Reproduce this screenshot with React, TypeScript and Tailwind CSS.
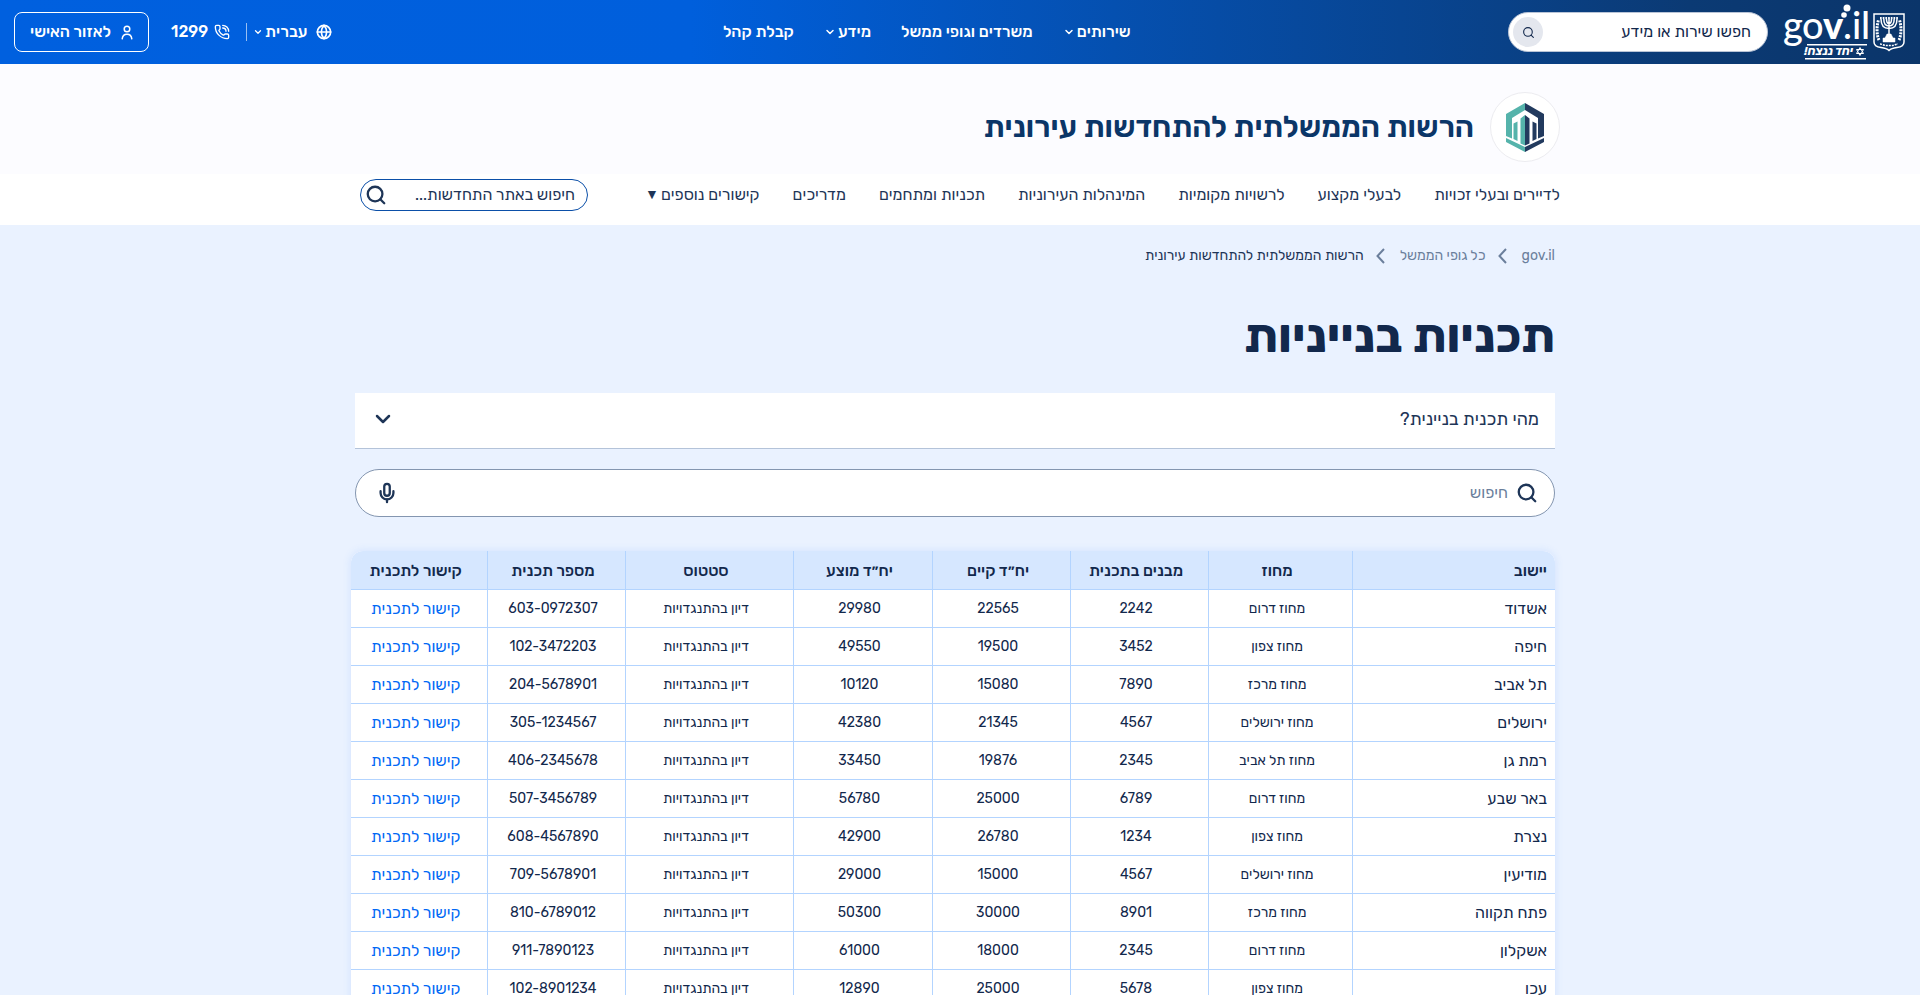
import { useState } from "react";
import { ChevronDown, Globe, Mic, PhoneCall, Search } from "lucide-react";

type Plan = {
  city: string;
  district: string;
  buildings: string;
  existing: string;
  proposed: string;
  status: string;
  planNumber: string;
};

const STATUS = "דיון בהתנגדויות";

const plans: Plan[] = [
  { city: "אשדוד", district: "מחוז דרום", buildings: "2242", existing: "22565", proposed: "29980", status: STATUS, planNumber: "603-0972307" },
  { city: "חיפה", district: "מחוז צפון", buildings: "3452", existing: "19500", proposed: "49550", status: STATUS, planNumber: "102-3472203" },
  { city: "תל אביב", district: "מחוז מרכז", buildings: "7890", existing: "15080", proposed: "10120", status: STATUS, planNumber: "204-5678901" },
  { city: "ירושלים", district: "מחוז ירושלים", buildings: "4567", existing: "21345", proposed: "42380", status: STATUS, planNumber: "305-1234567" },
  { city: "רמת גן", district: "מחוז תל אביב", buildings: "2345", existing: "19876", proposed: "33450", status: STATUS, planNumber: "406-2345678" },
  { city: "באר שבע", district: "מחוז דרום", buildings: "6789", existing: "25000", proposed: "56780", status: STATUS, planNumber: "507-3456789" },
  { city: "נצרת", district: "מחוז צפון", buildings: "1234", existing: "26780", proposed: "42900", status: STATUS, planNumber: "608-4567890" },
  { city: "מודיעין", district: "מחוז ירושלים", buildings: "4567", existing: "15000", proposed: "29000", status: STATUS, planNumber: "709-5678901" },
  { city: "פתח תקווה", district: "מחוז מרכז", buildings: "8901", existing: "30000", proposed: "50300", status: STATUS, planNumber: "810-6789012" },
  { city: "אשקלון", district: "מחוז דרום", buildings: "2345", existing: "18000", proposed: "61000", status: STATUS, planNumber: "911-7890123" },
  { city: "עכו", district: "מחוז צפון", buildings: "5678", existing: "25000", proposed: "12890", status: STATUS, planNumber: "102-8901234" },
];

const siteLinks = [
  "לדיירים ובעלי זכויות",
  "לבעלי מקצוע",
  "לרשויות מקומיות",
  "המינהלות העירוניות",
  "תכניות ומתחמים",
  "מדריכים",
];

function StateEmblem() {
  return (
    <svg width="32" height="39" viewBox="0 0 32 39" fill="none" stroke="white" aria-hidden="true">
      <path d="M1 1h30v28c0 4-3 5-7 5.500-4 .5-6 1-8 3-2-2-4-2.500-8-3-4-.5-7-1.500-7-5.500z" strokeWidth="1.500" />
      <path d="M8 6c0 6 2.500 9.500 8 9.500s8-3.500 8-9.500M10.800 6c0 4 1.500 7 5.200 7s5.200-3 5.200-7M13.500 6c0 2.500.7 4.500 2.500 4.500s2.500-2 2.500-4.500M16 5.500v17" strokeWidth="1.500" />
      <path d="M7 5h18" strokeWidth="2" strokeDasharray="1.700 1" />
      <path d="M14 21h4l2 4h-8zM10 25h12v4H10z" fill="white" strokeWidth=".5" />
      <path d="M6 27c-2.500-5-2.500-14-.5-20M26 27c2.500-5 2.500-14 .5-20" strokeWidth="3" strokeDasharray="2 1" />
      <path d="M7 31c2 0 4 1.500 6 1.500h6c2 0 4-1.500 6-1.500" strokeWidth="1.500" strokeDasharray="2 1" />
    </svg>
  );
}

function GovLogo() {
  return (
    <svg width="86" height="60" viewBox="0 0 86 60" fill="white" direction="ltr" aria-label="gov.il" role="img">
      <g fontFamily="Lato" fontSize="38">
        <text x="0" y="37">g</text>
        <text x="19" y="37">o</text>
        <text x="40" y="37" fontWeight="900">v</text>
        <text x="60" y="37">.</text>
        <text x="69" y="37">i</text>
        <text x="78" y="37">l</text>
      </g>
      <circle cx="64" cy="6" r="3.500" />
      <circle cx="61" cy="13" r="2.800" />
      <path d="M24 42h60v1.500H24zM22 56h61v1.500H22z" />
      <path d="M77 45.500l3.500 6h-7zM77 53.500l-3.500-6h7z" fill="none" stroke="white" />
      <text x="70" y="53" direction="rtl" fontFamily="Rubik, Open Sans" fontSize="12" fontWeight="700" fontStyle="italic">יחד ננצח!</text>
    </svg>
  );
}

function AuthorityLogo() {
  return (
    <svg width="38" height="49" viewBox="0 0 38 49" aria-hidden="true">
      <path d="M19 0L0 11v22l6 2.500V15l13-8zM7.500 20.500l4-2v19.500l-4-2zM14.500 15.500l4.500-3.500v30.500l-4.500-2zM0 35l19 9v5L0 39z" fill="#55b3ab" />
      <path d="M19 0l19 11v22l-6 2.500V15L19 7zM30.500 20.500l-4-2v19.500l4-2zM23.500 15.500L19 12v30.500l4.500-2zM38 35l-19 9v5l19-10z" fill="#223a5e" />
    </svg>
  );
}

function PersonIcon() {
  return (
    <svg width="12" height="15" viewBox="0 0 12 15" fill="none" stroke="currentColor" strokeWidth="1.500" strokeLinecap="round" aria-hidden="true">
      <circle cx="6" cy="4" r="2.800" />
      <path d="M1.200 13.800C1.500 11 3.200 9.300 6 9.300s4.500 1.700 4.800 4.500" />
    </svg>
  );
}

function CrumbArrow() {
  return (
    <svg width="9" height="16" viewBox="0 0 9 16" fill="none" stroke="currentColor" strokeWidth="2" className="ms-[15px] me-3" aria-hidden="true">
      <path d="M8 1L1.500 8 8 15" />
    </svg>
  );
}

function TopBar() {
  return (
    <header className="flex h-16 items-center justify-between bg-[linear-gradient(to_left,#0b356a_0%,#0b3a74_12%,#0550b0_42%,#005fdc_64%,#0060df_100%)] text-base font-medium text-white">
      <div className="flex items-center ps-[15px]">
        <StateEmblem />
        <div className="ms-1">
          <GovLogo />
        </div>
        <form role="search" className="ms-[15px] flex h-10 w-[260px] items-center rounded-full border border-[#b9c4d6] bg-white ps-4 pe-1">
          <input
            type="search"
            aria-label="חפשו שירות או מידע"
            placeholder="חפשו שירות או מידע"
            className="min-w-0 flex-1 text-base font-normal outline-none placeholder:text-[#12284c]"
          />
          <button type="button" aria-label="חיפוש" className="grid size-[30px] place-items-center rounded-full bg-[#e4e7ee] text-[#12284c]">
            <Search size={13} strokeWidth={2} />
          </button>
        </form>
      </div>
      <nav aria-label="ראשי" className="flex items-center gap-[30px]">
        <button type="button" className="flex items-center gap-0.5">
          שירותים
          <ChevronDown size={12} strokeWidth={3} />
        </button>
        <a href="#offices">משרדים וגופי ממשל</a>
        <button type="button" className="flex items-center gap-0.5">
          מידע
          <ChevronDown size={12} strokeWidth={3} />
        </button>
        <a href="#reception">קבלת קהל</a>
      </nav>
      <div className="flex items-center justify-end ps-[14px] pe-[14px]">
        <button type="button" className="flex items-center">
          <Globe size={16} strokeWidth={2.5} />
          <span className="ms-2">עברית</span>
          <ChevronDown size={10} strokeWidth={3} className="ms-0.5" />
        </button>
        <span className="ms-1.5 h-[18px] w-px bg-white/60" />
        <a href="tel:1299" className="ms-4 flex items-center gap-1.5">
          <PhoneCall size={16} strokeWidth={2} />
          1299
        </a>
        <a href="#personal" className="ms-[22px] flex h-10 w-[135px] items-center justify-center gap-2.5 rounded-lg border border-white">
          <PersonIcon />
          לאזור האישי
        </a>
      </div>
    </header>
  );
}

function SiteHeader() {
  return (
    <div className="bg-white text-[#1e3557]">
      <div className="bg-[#fcfcff]">
        <div className="mx-auto flex h-[110px] max-w-[1200px] items-center gap-4 pt-4">
          <div className="grid size-[70px] place-items-center rounded-full border border-[#ececf0] bg-white">
            <AuthorityLogo />
          </div>
          <a href="#home" className="text-[30px] font-semibold text-[#0b3668]">
            הרשות הממשלתית להתחדשות עירונית
          </a>
        </div>
      </div>
      <div className="mx-auto flex h-[51px] max-w-[1200px] items-center justify-between pb-[10px]">
        <nav aria-label="ניווט האתר" className="flex items-center gap-[33px] text-base">
          {siteLinks.map((label) => (
            <a key={label} href="#section">
              {label}
            </a>
          ))}
          <button type="button" className="flex items-center gap-0.5">
            קישורים נוספים
            <span className="text-sm">▼</span>
          </button>
        </nav>
        <form role="search" className="flex h-8 w-[228px] items-center rounded-full border border-[#0b4fa8] ps-3 pe-1">
          <input
            type="search"
            aria-label="חיפוש באתר התחדשות"
            placeholder="חיפוש באתר התחדשות..."
            className="min-w-0 flex-1 text-base outline-none placeholder:text-[#1e3557]"
          />
          <button type="button" aria-label="חיפוש באתר">
            <Search size={22} strokeWidth={2.5} />
          </button>
        </form>
      </div>
    </div>
  );
}

function PlansTable() {
  return (
    <div className="-me-1 mt-[34px] overflow-hidden rounded-t-xl shadow-[0_0_8px_rgba(70,140,255,0.15)]">
      <table className="w-full table-fixed border-collapse bg-white text-center text-[#12284c] [&_td]:border-s [&_td]:border-t [&_td]:border-[#b3d4ff] [&_td]:ps-1.5 [&_td]:pt-0.5 [&_td:first-child]:border-s-0 [&_td:first-child]:ps-2 [&_th]:border-s [&_th]:border-[#b3d4ff] [&_th]:ps-1.5 [&_th]:pt-0.5 [&_th]:font-medium [&_th:first-child]:border-s-0 [&_th:first-child]:ps-2">
        <colgroup>
          <col />
          <col className="w-[144px]" />
          <col className="w-[138px]" />
          <col className="w-[138px]" />
          <col className="w-[139px]" />
          <col className="w-[168px]" />
          <col className="w-[138px]" />
          <col className="w-[136px]" />
        </colgroup>
        <thead>
          <tr className="h-[38px] bg-[#d6e7ff] text-base">
            <th scope="col" className="text-start">יישוב</th>
            <th scope="col">מחוז</th>
            <th scope="col">מבנים בתכנית</th>
            <th scope="col">יח״ד קיים</th>
            <th scope="col">יח״ד מוצע</th>
            <th scope="col">סטטוס</th>
            <th scope="col">מספר תכנית</th>
            <th scope="col">קישור לתכנית</th>
          </tr>
        </thead>
        <tbody className="text-sm">
          {plans.map((plan) => (
            <tr key={plan.planNumber} className="h-[38px]">
              <td className="text-start text-base">{plan.city}</td>
              <td>{plan.district}</td>
              <td>{plan.buildings}</td>
              <td>{plan.existing}</td>
              <td>{plan.proposed}</td>
              <td>{plan.status}</td>
              <td>
                <bdi dir="ltr">{plan.planNumber}</bdi>
              </td>
              <td>
                <a href={`#${plan.planNumber}`} className="text-base text-[#0068f5]">
                  קישור לתכנית
                </a>
              </td>
            </tr>
          ))}
        </tbody>
      </table>
    </div>
  );
}

export default function App() {
  const [open, setOpen] = useState(false);
  const [query, setQuery] = useState("");

  return (
    <div dir="rtl" lang="he" className="min-h-screen bg-[#eaf2ff] font-['Rubik','Open_Sans','Liberation_Sans',sans-serif] text-[#12284c]">
      <TopBar />
      <SiteHeader />
      <main className="ps-[10px]">
        <div className="mx-auto max-w-[1200px]">
          <nav aria-label="פירורי לחם" className="flex h-[60px] items-center pt-0.5 text-sm text-[#6b7f9c]">
            <a href="#gov">gov.il</a>
            <CrumbArrow />
            <a href="#bodies">כל גופי הממשל</a>
            <CrumbArrow />
            <span className="text-[#1e3557]">הרשות הממשלתית להתחדשות עירונית</span>
          </nav>
          <h1 className="mt-[21px] text-[48px] leading-[60px] font-bold">תכניות בנייניות</h1>
          <button
            type="button"
            aria-expanded={open}
            onClick={() => setOpen(!open)}
            className="mt-[27px] flex h-14 w-full items-center justify-between border-b border-[#b4c3d9] bg-white ps-4 pe-4 pb-1 text-lg text-[#1e3557]"
          >
            מהי תכנית בניינית?
            <ChevronDown size={24} strokeWidth={2.5} />
          </button>
          <form role="search" className="mt-5 flex h-12 items-center gap-2 rounded-full border border-[#8496b0] bg-white ps-4 pe-5 text-[#1e3557]">
            <Search size={22} strokeWidth={2.5} />
            <input
              type="search"
              aria-label="חיפוש"
              placeholder="חיפוש"
              value={query}
              onChange={(e) => setQuery(e.target.value)}
              className="min-w-0 flex-1 text-base outline-none placeholder:text-[#6b7f9c]"
            />
            <button type="button" aria-label="חיפוש קולי">
              <Mic size={22} strokeWidth={2.5} />
            </button>
          </form>
          <PlansTable />
        </div>
      </main>
    </div>
  );
}
